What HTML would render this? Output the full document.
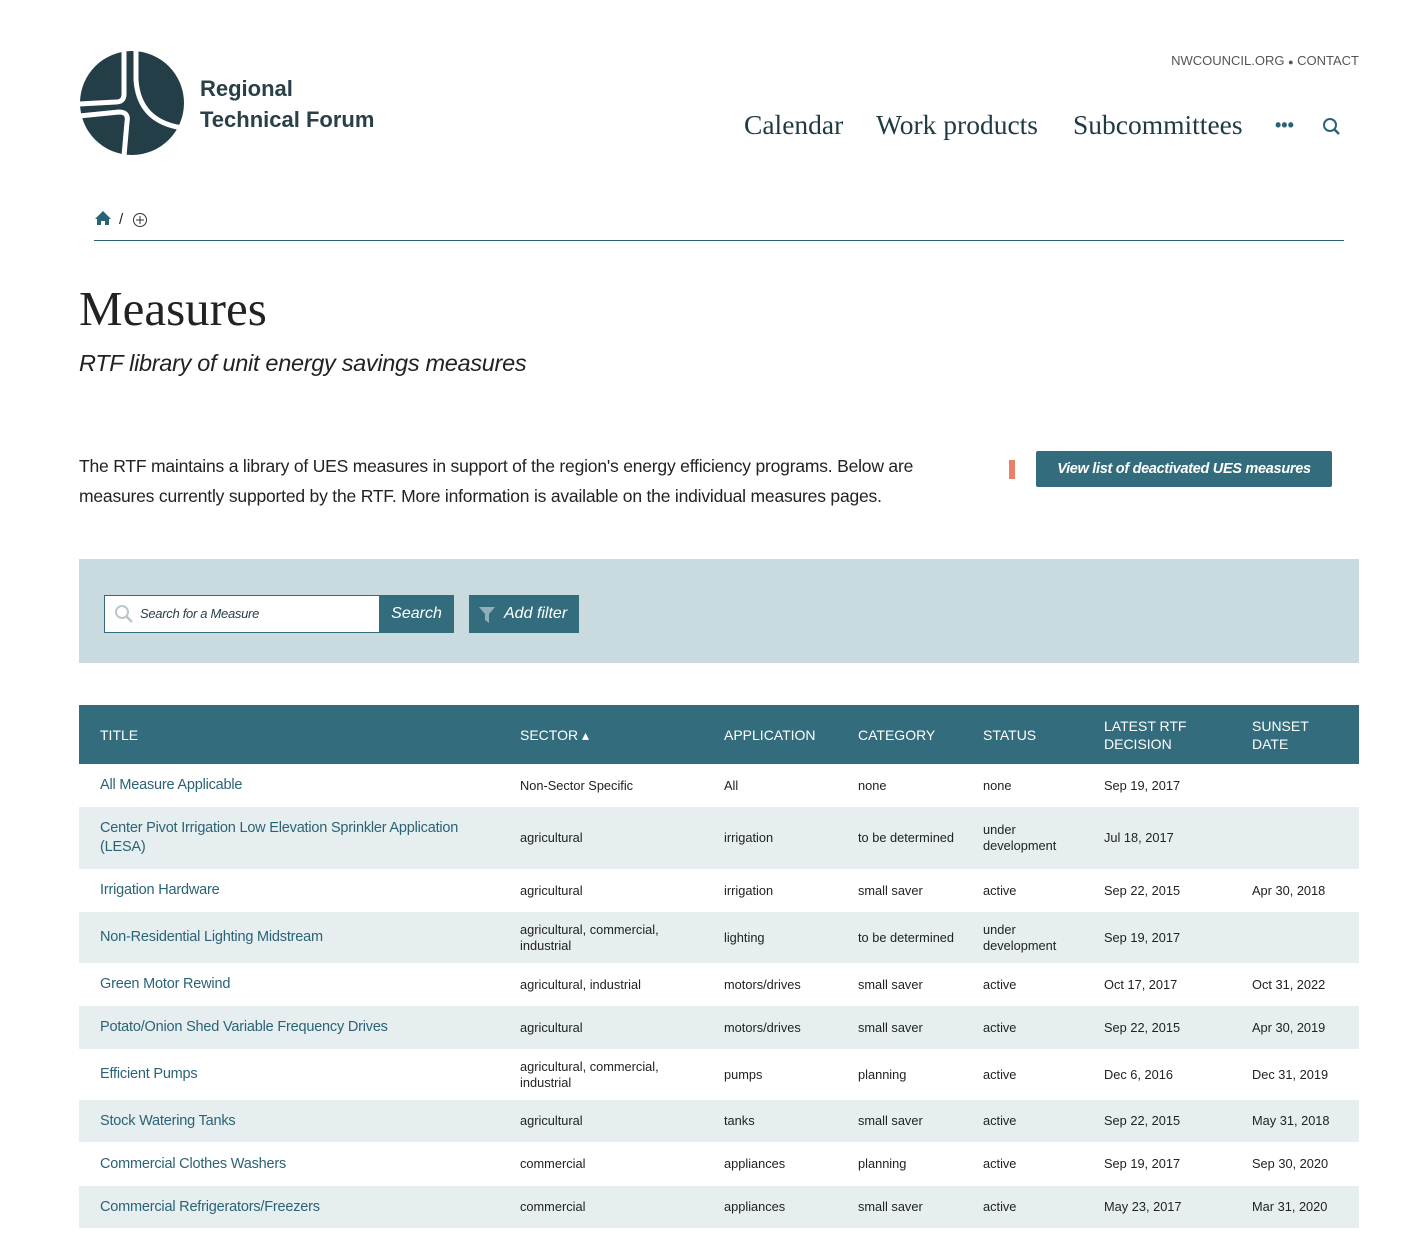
<!DOCTYPE html>
<html><head><meta charset="utf-8"><style>
*{margin:0;padding:0;box-sizing:border-box}
body{width:1426px;height:1240px;background:#fff;font-family:"Liberation Sans",sans-serif;color:#222;position:relative;overflow:hidden}
.a{position:absolute}
.nav{font-family:"Liberation Serif",serif;font-size:27.5px;color:#1f3a42;top:109px}
table{position:absolute;left:79px;top:705px;width:1280px;border-collapse:collapse;font-size:12.8px;color:#222}
th{background:#336c7c;color:#fff;font-weight:normal;text-align:left;font-size:14px;height:59px;line-height:18px;padding:0 0 0 21px}
td{padding:0 0 0 21px;line-height:16px;vertical-align:middle}
tr.s td{background:#e6eef0}
td.t{color:#2a6376;font-size:14.5px;line-height:19px;padding-right:10px;letter-spacing:-0.2px}
</style></head><body>
<svg class="a" style="left:79px;top:50px" width="106" height="106" viewBox="0 0 106 106">
<circle cx="53" cy="53" r="52" fill="#233e47"/>
<path d="M45 0 L45 44 Q45 52 37 52 L0 54" stroke="#fff" stroke-width="5" fill="none"/>
<path d="M0 66 L40 62 Q50 62 48 72 L45 106" stroke="#fff" stroke-width="5" fill="none"/>
<path d="M57 0 L57 30 Q60 72 104 78" stroke="#fff" stroke-width="5" fill="none"/>
</svg>
<div class="a" style="left:200px;top:73px;font-size:22px;font-weight:bold;color:#2a4048;line-height:31px">Regional<br>Technical Forum</div>
<div class="a" style="right:67px;top:53px;font-size:13px;color:#555">NWCOUNCIL.ORG <span style="font-size:9px">●</span> CONTACT</div>
<div class="a nav" style="left:744px">Calendar</div>
<div class="a nav" style="left:876px">Work products</div>
<div class="a nav" style="left:1073px">Subcommittees</div>
<div class="a" style="left:1275px;top:115px;font-size:18px;color:#2a6376;font-weight:bold">•••</div>
<svg class="a" style="left:1322px;top:117px" width="20" height="20"><circle cx="8" cy="8" r="6" stroke="#2a6376" stroke-width="2" fill="none"/><path d="M12 12 L17 17" stroke="#2a6376" stroke-width="2.5"/></svg>
<svg class="a" style="left:94px;top:210px" width="18" height="16"><path d="M9 1 L17 9 L15 9 L15 15 L11 15 L11 11 L7 11 L7 15 L3 15 L3 9 L1 9Z" fill="#2a6376"/></svg>
<div class="a" style="left:119px;top:211px;font-size:15px">/</div>
<svg class="a" style="left:132px;top:212px" width="16" height="16"><circle cx="8" cy="8" r="6.5" stroke="#333" fill="none"/><path d="M8 4V12M4 8H12" stroke="#333"/></svg>
<div class="a" style="left:94px;top:240px;width:1250px;height:1px;background:#2a6376"></div>
<div class="a" style="left:79px;top:280px;font-family:'Liberation Serif',serif;font-size:49px;color:#222">Measures</div>
<div class="a" style="left:79px;top:350px;font-size:23.5px;font-style:italic;color:#222;letter-spacing:-0.3px">RTF library of unit energy savings measures</div>
<div class="a" style="left:79px;top:451px;font-size:17.5px;line-height:30px;width:900px;letter-spacing:-0.2px">The RTF maintains a library of UES measures in support of the region's energy efficiency programs. Below are measures currently supported by the RTF. More information is available on the individual measures pages.</div>
<div class="a" style="left:1009px;top:460px;width:6px;height:19px;background:#e8806a"></div>
<div class="a" style="left:1036px;top:451px;width:296px;height:36px;background:#336c7c;border-radius:2px;color:#fff;font-size:14.5px;font-style:italic;font-weight:bold;line-height:36px;text-align:center;letter-spacing:-0.3px">View list of deactivated UES measures</div>
<div class="a" style="left:79px;top:559px;width:1280px;height:104px;background:#c9dbdf"></div>
<div class="a" style="left:104px;top:595px;width:276px;height:38px;background:#fff;border:1px solid #336c7c;border-right:none"></div>
<svg class="a" style="left:114px;top:604px" width="20" height="20"><circle cx="8" cy="8" r="6" stroke="#b5c8cc" stroke-width="2" fill="none"/><path d="M12 12L18 18" stroke="#b5c8cc" stroke-width="2.5"/></svg>
<div class="a" style="left:140px;top:606px;font-size:13px;font-style:italic;color:#2a4048;letter-spacing:-0.3px">Search for a Measure</div>
<div class="a" style="left:379px;top:595px;width:75px;height:38px;background:#336c7c;color:#fff;font-style:italic;font-size:16px;line-height:38px;text-align:center">Search</div>
<div class="a" style="left:469px;top:595px;width:110px;height:38px;background:#336c7c;color:#fff;font-style:italic;font-size:16px;line-height:38px;padding-left:35px">Add filter</div>
<svg class="a" style="left:478px;top:606px" width="18" height="18"><path d="M1 1H17L11 8V17L7 14V8Z" fill="#8fb0b8"/></svg>
<table>
<colgroup><col style="width:420px"><col style="width:204px"><col style="width:134px"><col style="width:125px"><col style="width:121px"><col style="width:148px"><col></colgroup>
<tr><th>TITLE</th><th>SECTOR ▴</th><th>APPLICATION</th><th>CATEGORY</th><th>STATUS</th><th>LATEST RTF<br>DECISION</th><th>SUNSET<br>DATE</th></tr>
<tr style="height:43px"><td class="t">All Measure Applicable</td><td>Non-Sector Specific</td><td>All</td><td>none</td><td>none</td><td>Sep 19, 2017</td><td></td></tr>
<tr class="s" style="height:62px"><td class="t">Center Pivot Irrigation Low Elevation Sprinkler Application<br>(LESA)</td><td>agricultural</td><td>irrigation</td><td>to be determined</td><td>under<br>development</td><td>Jul 18, 2017</td><td></td></tr>
<tr style="height:43px"><td class="t">Irrigation Hardware</td><td>agricultural</td><td>irrigation</td><td>small saver</td><td>active</td><td>Sep 22, 2015</td><td>Apr 30, 2018</td></tr>
<tr class="s" style="height:51px"><td class="t">Non-Residential Lighting Midstream</td><td>agricultural, commercial,<br>industrial</td><td>lighting</td><td>to be determined</td><td>under<br>development</td><td>Sep 19, 2017</td><td></td></tr>
<tr style="height:43px"><td class="t">Green Motor Rewind</td><td>agricultural, industrial</td><td>motors/drives</td><td>small saver</td><td>active</td><td>Oct 17, 2017</td><td>Oct 31, 2022</td></tr>
<tr class="s" style="height:43px"><td class="t">Potato/Onion Shed Variable Frequency Drives</td><td>agricultural</td><td>motors/drives</td><td>small saver</td><td>active</td><td>Sep 22, 2015</td><td>Apr 30, 2019</td></tr>
<tr style="height:51px"><td class="t">Efficient Pumps</td><td>agricultural, commercial,<br>industrial</td><td>pumps</td><td>planning</td><td>active</td><td>Dec 6, 2016</td><td>Dec 31, 2019</td></tr>
<tr class="s" style="height:42px"><td class="t">Stock Watering Tanks</td><td>agricultural</td><td>tanks</td><td>small saver</td><td>active</td><td>Sep 22, 2015</td><td>May 31, 2018</td></tr>
<tr style="height:44px"><td class="t">Commercial Clothes Washers</td><td>commercial</td><td>appliances</td><td>planning</td><td>active</td><td>Sep 19, 2017</td><td>Sep 30, 2020</td></tr>
<tr class="s" style="height:42px"><td class="t">Commercial Refrigerators/Freezers</td><td>commercial</td><td>appliances</td><td>small saver</td><td>active</td><td>May 23, 2017</td><td>Mar 31, 2020</td></tr>
</table>
</body></html>
